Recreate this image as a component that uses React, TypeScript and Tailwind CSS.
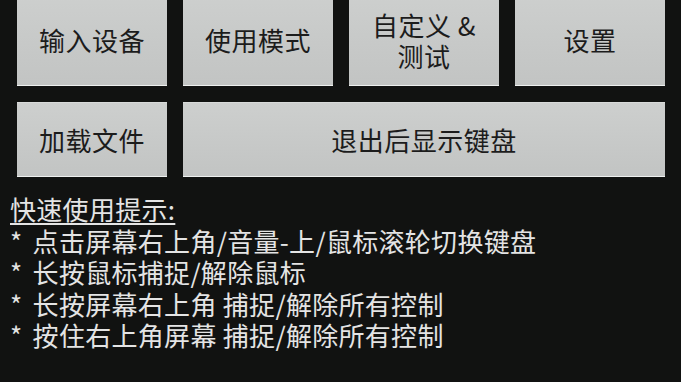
import React from 'react';

const tips = [
  '点击屏幕右上角/音量-上/鼠标滚轮切换键盘',
  '长按鼠标捕捉/解除鼠标',
  '长按屏幕右上角 捕捉/解除所有控制',
  '按住右上角屏幕 捕捉/解除所有控制',
];

function Btn({ children, className = '' }: { children: React.ReactNode; className?: string }) {
  return (
    <button
      className={`flex items-center justify-center text-center bg-gradient-to-b from-[#cdcfce] to-[#c2c4c3] border-b border-b-[#eef0ef] border-t border-t-[#d8dad9] text-[#1c1c1c] text-[26px] leading-[31px] tracking-[0.5px] ${className}`}
    >
      {children}
    </button>
  );
}

export default function App() {
  return (
    <div
      className="w-[681px] h-[382px] overflow-hidden bg-[#111211]"
      style={{ fontFamily: '"Noto Sans CJK SC", "Noto Sans", sans-serif' }}
    >
      <div className="pl-[17px] pr-[16px] -mt-[7px] grid grid-cols-[150px_150px_150px_150px] gap-4">
        <Btn className="h-[93px]">输入设备</Btn>
        <Btn className="h-[93px]">使用模式</Btn>
        <Btn className="h-[93px]">
          自定义 &amp;
          <br />
          测试
        </Btn>
        <Btn className="h-[93px]">设置</Btn>
        <Btn className="h-[75px]">加载文件</Btn>
        <Btn className="h-[75px] col-span-3">退出后显示键盘</Btn>
      </div>
      <div className="pl-[10px] pt-[16px] text-[#e4e4e4] text-[26px] leading-[31.5px] tracking-[0.3px]">
        <div className="underline underline-offset-[3px]">快速使用提示:</div>
        {tips.map((t) => (
          <div key={t} className="whitespace-pre">
            <span className="mr-[4px]">*</span> {t}
          </div>
        ))}
      </div>
    </div>
  );
}
